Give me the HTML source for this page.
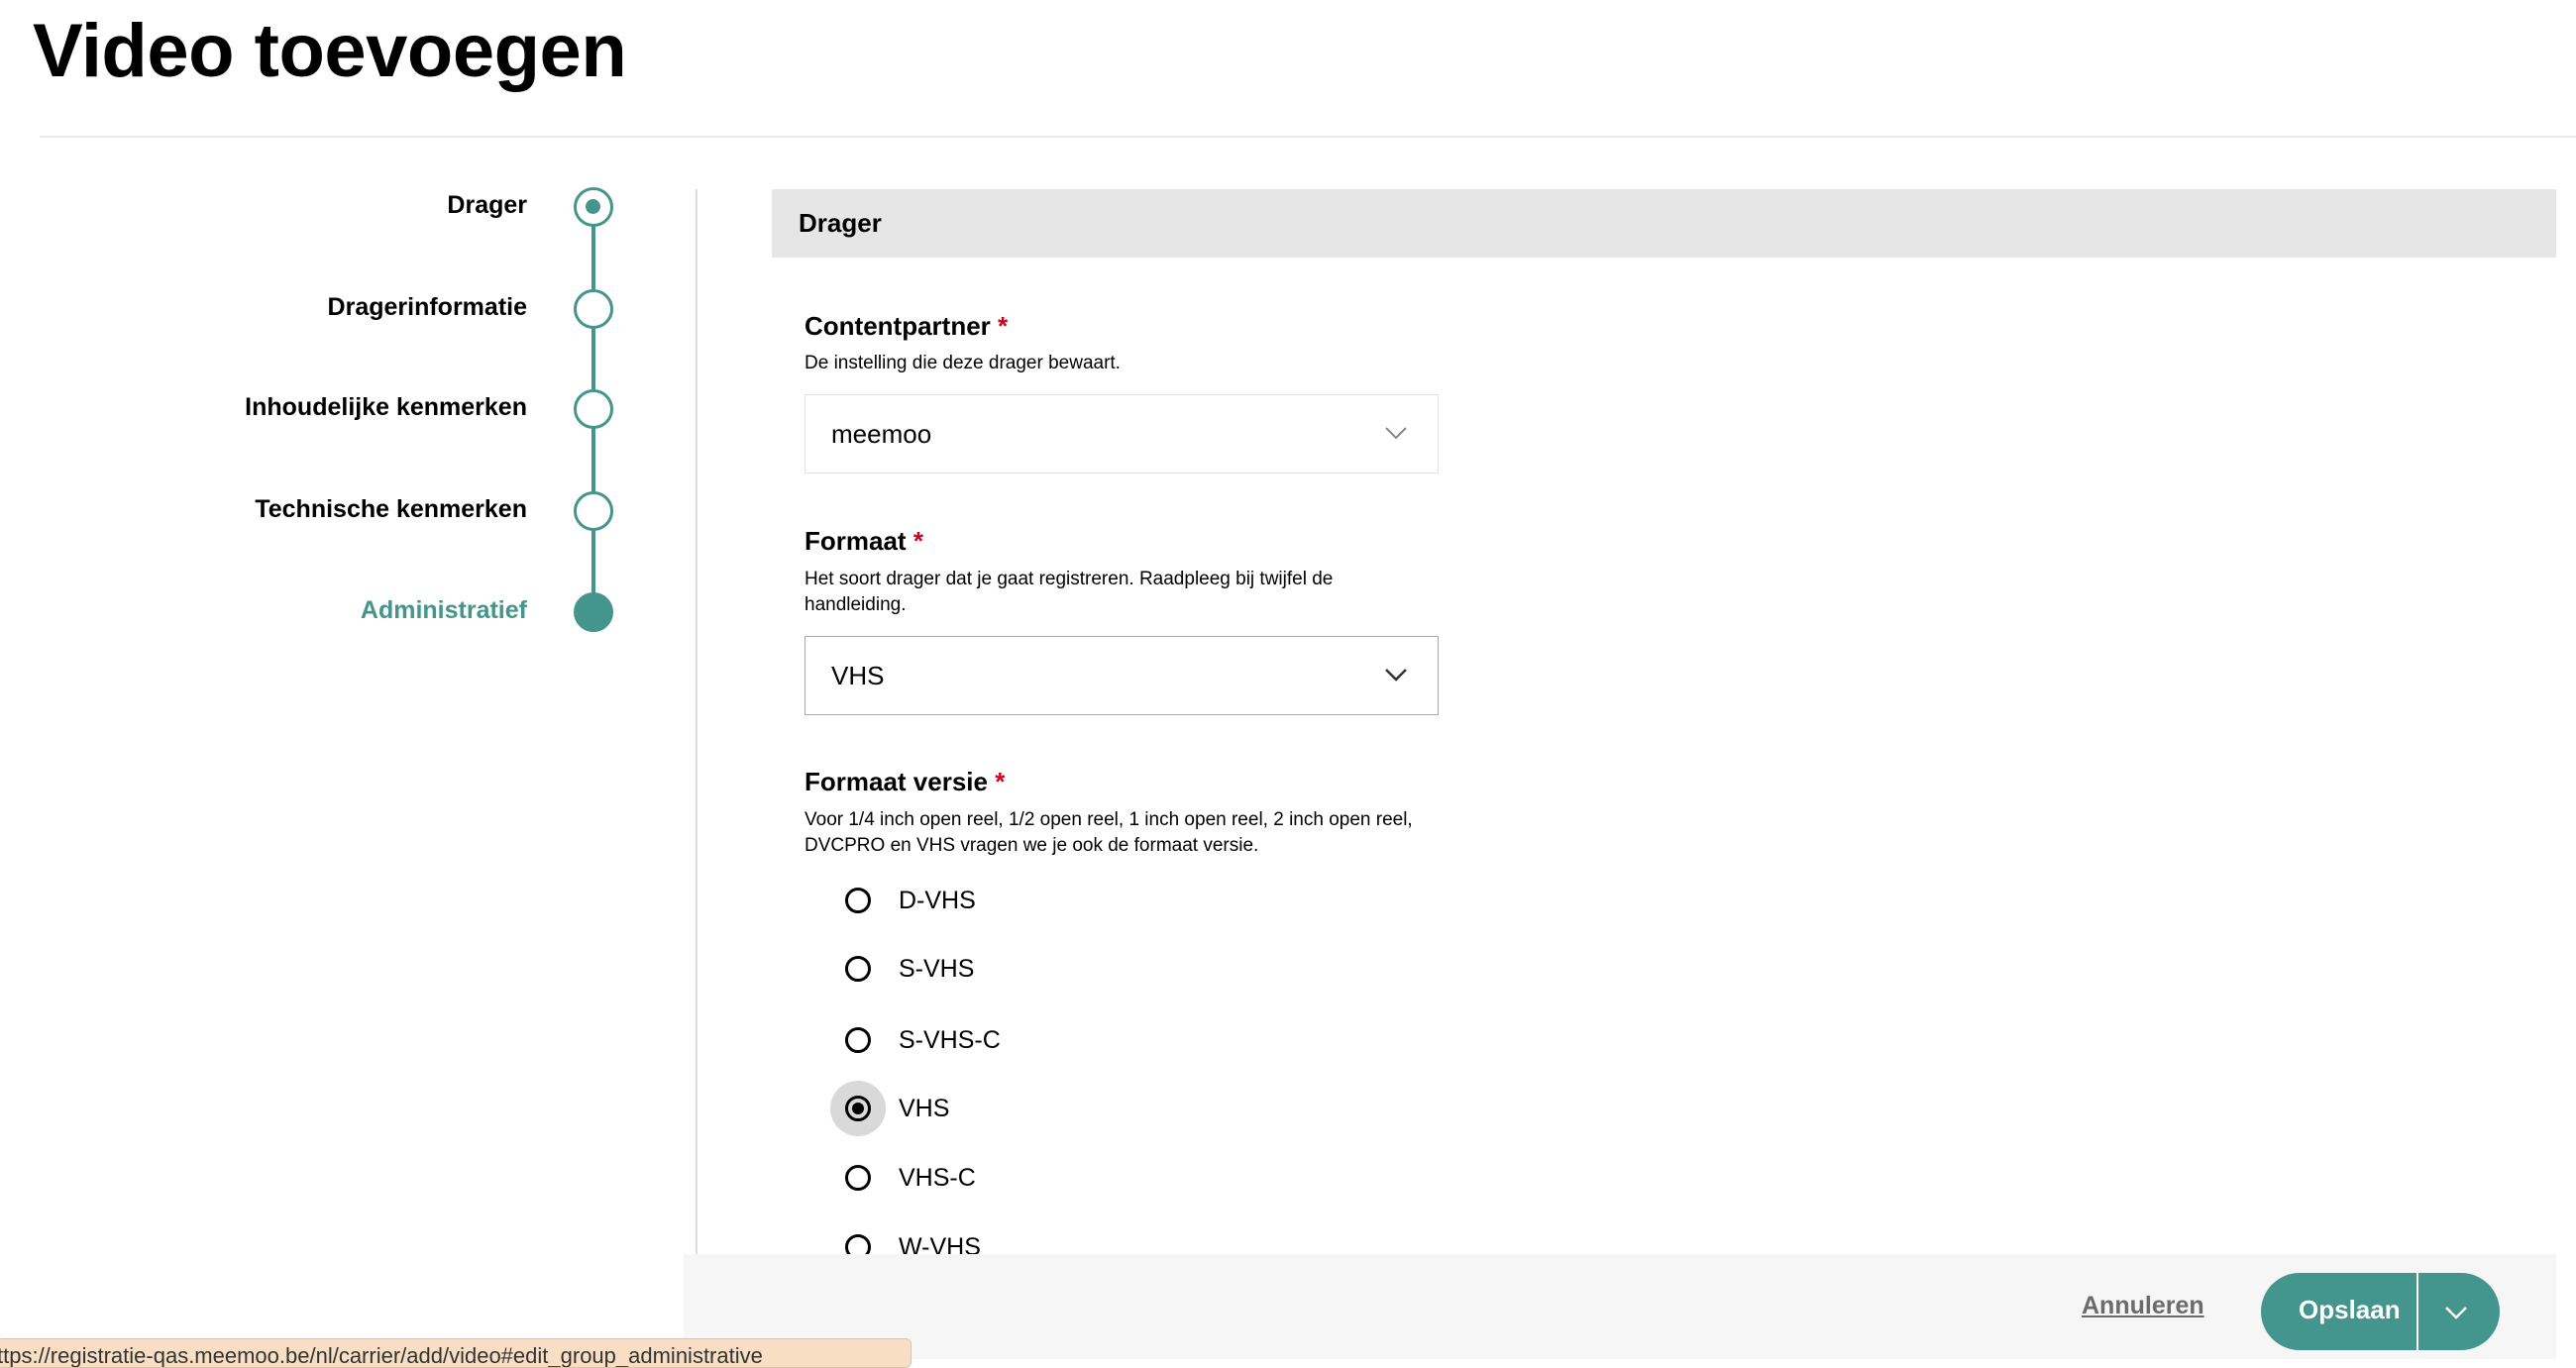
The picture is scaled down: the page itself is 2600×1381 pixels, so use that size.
<!DOCTYPE html>
<html><head><meta charset="utf-8">
<style>
*{margin:0;padding:0;box-sizing:border-box}
body{width:2600px;height:1372px;overflow:hidden;background:#fff;font-family:"Liberation Sans",sans-serif;color:#000;position:relative}
.abs{position:absolute}
h1{position:absolute;left:33px;top:8px;font-size:76px;font-weight:bold;letter-spacing:-0.5px}
.hr{left:40px;top:137px;width:2560px;height:2px;background:#e8e8e8}
.vdiv{left:702px;top:191px;width:2px;height:1090px;background:#ddd}
.line{left:597px;top:210px;width:4px;height:408px;background:#44968d}
.circ{width:40px;height:40px;border-radius:50%;border:3.5px solid #44968d;background:#fff;left:579px}
.lbl{right:2068px;font-size:25px;font-weight:bold;white-space:nowrap;text-align:right}
.band{left:779px;top:191px;width:1801px;height:69px;background:#e6e6e6}
.band span{position:absolute;left:27px;top:19px;font-size:26px;font-weight:bold}
.flab{left:812px;font-size:26px;font-weight:bold;white-space:nowrap}
.flab b{color:#d0021b;font-weight:bold}
.help{left:812px;font-size:19px;line-height:26px;white-space:nowrap}
.sel{left:812px;width:640px;height:80px;border:1.5px solid #e2e2e2;background:#fff}
.sel span{position:absolute;left:26px;top:24px;font-size:26px}
.sel svg{position:absolute;right:30px;top:30px}
.radio{left:853px;width:26px;height:26px;border:3px solid #000;border-radius:50%}
.rt{left:907px;font-size:25px}
.footer{left:690px;top:1266px;width:1890px;height:106px;background:#f6f6f6}
.btn{left:2282px;top:1285px;width:241px;height:78px;border-radius:39px;background:#43958d}
</style></head><body>
<h1>Video toevoegen</h1>
<div class="abs hr"></div>
<div class="abs vdiv"></div>
<div class="abs line"></div>
<div class="abs circ" style="top:189px"><div style="position:absolute;left:9px;top:9px;width:15px;height:15px;border-radius:50%;background:#44968d"></div></div>
<div class="abs circ" style="top:292px"></div>
<div class="abs circ" style="top:393px"></div>
<div class="abs circ" style="top:496px"></div>
<div class="abs circ" style="top:598px;background:#44968d"></div>
<div class="abs lbl" style="top:193px">Drager</div>
<div class="abs lbl" style="top:296px">Dragerinformatie</div>
<div class="abs lbl" style="top:397px">Inhoudelijke kenmerken</div>
<div class="abs lbl" style="top:500px">Technische kenmerken</div>
<div class="abs lbl" style="top:602px;color:#44968d">Administratief</div>

<div class="abs band"><span>Drager</span></div>

<div class="abs flab" style="top:314px">Contentpartner <b>*</b></div>
<div class="abs help" style="top:354px">De instelling die deze drager bewaart.</div>
<div class="abs sel" style="top:398px"><span>meemoo</span><svg width="24" height="16" viewBox="0 0 24 16"><path d="M2 3l10 10L22 3" fill="none" stroke="#888" stroke-width="2"/></svg></div>

<div class="abs flab" style="top:531px">Formaat <b>*</b></div>
<div class="abs help" style="top:572px">Het soort drager dat je gaat registreren. Raadpleeg bij twijfel de<br>handleiding.</div>
<div class="abs sel" style="top:642px;border-color:#aaa"><span>VHS</span><svg width="24" height="16" viewBox="0 0 24 16"><path d="M2 3l10 10L22 3" fill="none" stroke="#333" stroke-width="2.5"/></svg></div>

<div class="abs flab" style="top:774px">Formaat versie <b>*</b></div>
<div class="abs help" style="top:815px">Voor 1/4 inch open reel, 1/2 open reel, 1 inch open reel, 2 inch open reel,<br>DVCPRO en VHS vragen we je ook de formaat versie.</div>

<div class="abs radio" style="top:896px"></div><div class="abs rt" style="top:895px">D-VHS</div>
<div class="abs radio" style="top:965px"></div><div class="abs rt" style="top:964px">S-VHS</div>
<div class="abs radio" style="top:1037px"></div><div class="abs rt" style="top:1036px">S-VHS-C</div>
<div class="abs" style="left:838px;top:1091px;width:56px;height:56px;border-radius:50%;background:#d9d9d9"></div>
<div class="abs radio" style="top:1106px"><div style="position:absolute;left:4px;top:4px;width:12px;height:12px;border-radius:50%;background:#000"></div></div><div class="abs rt" style="top:1105px">VHS</div>
<div class="abs radio" style="top:1176px"></div><div class="abs rt" style="top:1175px">VHS-C</div>
<div class="abs radio" style="top:1246px"></div><div class="abs rt" style="top:1245px">W-VHS</div>

<div class="abs footer"></div>
<div class="abs" style="left:2101px;top:1304px;font-size:25px;font-weight:bold;color:#6b6b6b;text-decoration:underline">Annuleren</div>
<div class="abs btn">
  <div style="position:absolute;left:38px;top:22px;font-size:26px;font-weight:bold;color:#fff">Opslaan</div>
  <div style="position:absolute;left:157px;top:0;width:2px;height:78px;background:#fff"></div>
  <svg style="position:absolute;left:185px;top:32px" width="24" height="16" viewBox="0 0 24 16"><path d="M2 3l10 10L22 3" fill="none" stroke="#fff" stroke-width="2.5"/></svg>
</div>
<div class="abs" style="left:-4px;top:1351px;width:924px;height:30px;background:#f8dfc3;border:1px solid #d9c4a8;border-radius:6px;font-size:22px;color:#333;padding:4px 0 0 0;white-space:nowrap;overflow:hidden">ttps://registratie-qas.meemoo.be/nl/carrier/add/video#edit_group_administrative</div>
</body></html>
